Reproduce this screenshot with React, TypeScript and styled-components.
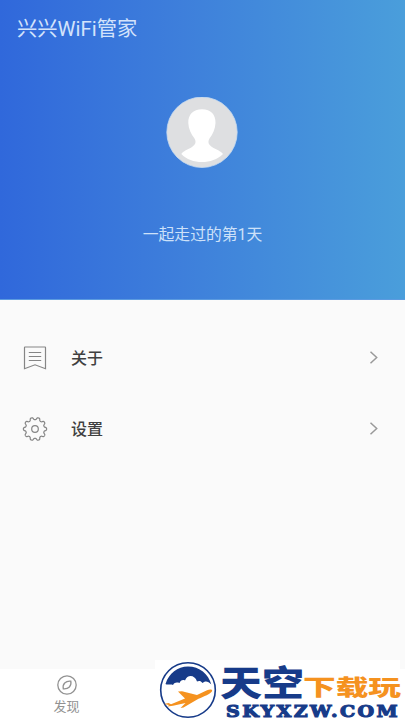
import React from "react";
import styled, { createGlobalStyle } from "styled-components";

const GlobalStyle = createGlobalStyle`
  * { box-sizing: border-box; }
  body {
    margin: 0;
    background: #fafafa;
    font-family: Roboto, "Noto Sans CJK SC", sans-serif;
  }
`;

const Screen = styled.div`
  position: relative;
  width: 405px;
  height: 720px;
  display: flex;
  flex-direction: column;
  overflow: hidden;
  background: #fafafa;
`;

const Header = styled.header`
  height: 300px;
  flex: none;
  display: flex;
  flex-direction: column;
  align-items: center;
  border-bottom: 1px solid #5c9be0;
  background: linear-gradient(90deg, #3068db 0%, #3e7fdb 45%, #4a9edb 100%);
`;

const Title = styled.h1`
  align-self: stretch;
  margin: 0;
  padding: 14px 0 0 17px;
  height: 97px;
  font-size: 20.3px;
  line-height: 30px;
  font-weight: 400;
  color: #d3e3fb;
`;

const Avatar = styled.svg`
  width: 72px;
  height: 72px;
  display: block;
  margin-right: 1px;
`;

const Days = styled.p`
  margin: 54px 0 0;
  font-size: 15.8px;
  line-height: 24px;
  font-weight: 400;
  color: #cde1f9;
`;

const Menu = styled.nav`
  flex: 1;
  padding-top: 22px;
`;

const MenuRow = styled.div`
  height: 71px;
  display: flex;
  align-items: center;
  padding: 0 26px 0 22px;
`;

const RowIcon = styled.svg`
  width: 26px;
  height: 26px;
  fill: none;
  stroke: #858585;
  stroke-width: 1.2;
`;

const RowLabel = styled.span`
  flex: 1;
  margin-left: 23px;
  padding-top: 2px;
  font-size: 16px;
  line-height: 24px;
  font-weight: 500;
  color: #404040;
`;

const Chevron = styled.svg`
  width: 10px;
  height: 16px;
  fill: none;
  stroke: #999;
  stroke-width: 1.5;
`;

const TabBar = styled.footer`
  height: 51px;
  flex: none;
  background: #fff;
`;

const Tab = styled.div`
  width: 133px;
  height: 100%;
  padding-top: 5px;
  display: flex;
  flex-direction: column;
  align-items: center;
`;

const TabIcon = styled.svg`
  width: 22px;
  height: 22px;
  fill: none;
  stroke: #929292;
  stroke-width: 1.3;
`;

const TabLabel = styled.span`
  margin-top: 1px;
  font-size: 13px;
  line-height: 20px;
  color: #929292;
`;

const Watermark = styled.aside`
  position: absolute;
  left: 155px;
  top: 660px;
  width: 245px;
  height: 60px;
  display: flex;
  padding-left: 4px;
  background: #fff;
`;

const Emblem = styled.svg`
  width: 60px;
  height: 60px;
  flex: none;
`;

const Wordmark = styled.svg`
  width: 184px;
  height: 60px;
  flex: none;
  overflow: visible;
`;

const BrandText = styled.text<{ $tone: string; $size: number; $weight: number }>`
  font-family: "Noto Sans CJK SC", sans-serif;
  font-size: ${(p) => p.$size}px;
  font-weight: ${(p) => p.$weight};
  fill: ${(p) => p.$tone};
`;

const DomainText = styled.text`
  font-family: "DejaVu Serif", serif;
  font-size: 17.5px;
  font-weight: 700;
  letter-spacing: 2.2px;
  fill: #173b89;
  stroke: #173b89;
  stroke-width: 1.2;
`;

const gearPath = (() => {
  const points: string[] = [];
  for (let i = 0; i <= 200; i++) {
    const a = (i / 200) * Math.PI * 2;
    const wave = Math.tanh(1.8 * Math.cos(10 * a)) / Math.tanh(1.8);
    const r = 10.5 + 1.1 * wave;
    points.push(`${(13 + r * Math.cos(a)).toFixed(2)} ${(13 + r * Math.sin(a)).toFixed(2)}`);
  }
  return `M${points.join("L")}Z`;
})();

const NoteIcon = () => (
  <RowIcon viewBox="0 0 26 26">
    <path d="M3 2Q2.500 2 2.500 2.500V23.700L13 19.800L23.500 23.700V2.500Q23.500 2 23 2Z" />
    <path d="M6.800 7.500H19.200M6.800 11.500H19.200M6.800 15.500H19.200" />
  </RowIcon>
);

const GearIcon = () => (
  <RowIcon viewBox="0 0 26 26">
    <path d={gearPath} strokeLinejoin="round" />
    <circle cx="13" cy="13" r="3.3" />
  </RowIcon>
);

const items = [
  { label: "关于", Icon: NoteIcon },
  { label: "设置", Icon: GearIcon },
];

export default function App() {
  return (
    <>
      <GlobalStyle />
      <Screen>
        <Header>
          <Title>兴兴WiFi管家</Title>
          <Avatar viewBox="0 0 72 72">
            <circle cx="36" cy="35.3" r="35.2" fill="#dedfe1" stroke="#c6dbf0" strokeWidth=".8" />
            <path
              fill="#fff"
              d="M36 12.3C27 12.3 22 18 22.3 26C22.5 32 25 37 28.500 41.500C30.500 45 29.500 47.500 26 50C22 52.500 17 54 15.300 57C20.500 62.500 28 65 36 65C44 65 51.500 62.500 57 57C55 54 50 52.500 46 50C42.500 47.500 41.500 45 43.500 41.500C47 37 49.200 32 49.500 26C49.800 18 45 12.300 36 12.300Z"
            />
          </Avatar>
          <Days>一起走过的第1天</Days>
        </Header>
        <Menu>
          {items.map(({ label, Icon }) => (
            <MenuRow key={label}>
              <Icon />
              <RowLabel>{label}</RowLabel>
              <Chevron viewBox="0 0 10 16">
                <path d="M1.500 1.700L7.700 7.500L1.500 13.300" />
              </Chevron>
            </MenuRow>
          ))}
        </Menu>
        <TabBar>
          <Tab>
            <TabIcon viewBox="0 0 22 22">
              <circle cx="11" cy="11" r="9.2" />
              <path d="M14.800 7.200C15.800 12 12.500 15.300 7.300 14.800C6.300 10 9.600 6.700 14.800 7.200Z" />
            </TabIcon>
            <TabLabel>发现</TabLabel>
          </Tab>
        </TabBar>
        <Watermark>
          <Emblem viewBox="0 0 60 60">
            <circle cx="29" cy="30" r="27.300" fill="#fff" stroke="#173b89" strokeWidth="1.600" />
            <path
              fill="#173b89"
              d="M6.500 24C10 13 18.500 6.500 29 6.500C40.500 6.500 49.500 14 52.300 24.500C49 20.500 45.500 21 43.500 23C42 20.500 39.500 20.500 38 21.500C36 15 28.500 14 26 20.500C23.500 19.500 21.500 20.500 20.500 23C17.500 22 15.500 22.500 14 25C11.500 23.500 8.500 25.500 6.500 24Z"
            />
            <path
              fill="#f5921f"
              d="M5 44L9.500 43L12 44.200L26 38.500L19 31.500L23 31.200L38 35L48 30.200C51 29 54 29.300 53 31.300C51.500 34 45 36.500 39.500 38.800L24.500 47.500L21.500 48L26.500 43L14 45.800L8.500 46.500L10 45Z"
            />
          </Emblem>
          <Wordmark viewBox="0 0 184 60">
            <BrandText x="1" y="35.500" $tone="#173b89" $size={35} $weight={900} textLength="84" lengthAdjust="spacingAndGlyphs">
              天空
            </BrandText>
            <BrandText x="84" y="35" $tone="#f5921f" $size={21.500} $weight={900} textLength="98" lengthAdjust="spacingAndGlyphs">
              下载玩
            </BrandText>
            <DomainText x="7" y="56.500" textLength="174" lengthAdjust="spacingAndGlyphs">
              SKYXZW.COM
            </DomainText>
          </Wordmark>
        </Watermark>
      </Screen>
    </>
  );
}
